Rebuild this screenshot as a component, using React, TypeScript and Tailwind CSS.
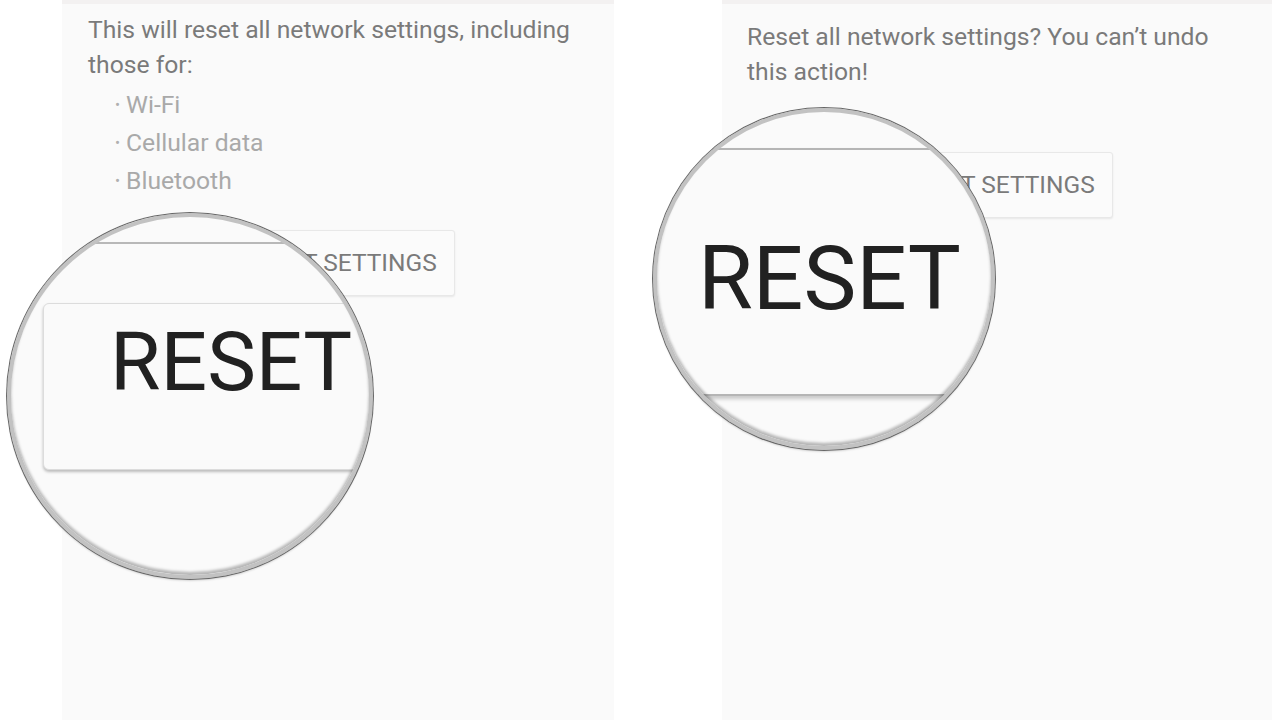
import React from "react";

const font = { fontFamily: "Roboto, 'Noto Sans', sans-serif" };

function Magnifier({
  className,
  children,
}: {
  className: string;
  children: React.ReactNode;
}) {
  return (
    <div className={`absolute rounded-full ${className}`}>
      <div className="relative w-full h-full rounded-full overflow-hidden bg-[#fafafa]">
        {children}
        <div className="absolute inset-0 rounded-full border-[4px] border-[#c2c2c2] shadow-[inset_0_-3px_3px_rgba(0,0,0,0.28)]" />
      </div>
      <div className="absolute inset-0 rounded-full shadow-[0_0_0_1px_#666666,0_2px_2px_rgba(0,0,0,0.15)] pointer-events-none" />
    </div>
  );
}

function Bullet({ children }: { children: React.ReactNode }) {
  return (
    <li className="flex items-center h-[38px]">
      <span className="text-[15px] w-[11px] text-[#b0b0b0]">•</span>
      <span>{children}</span>
    </li>
  );
}

export default function App() {
  return (
    <div
      className="relative w-[1280px] h-[720px] bg-white flex overflow-hidden"
      style={font}
    >
      {/* Left panel */}
      <div className="ml-[62px] w-[552px] h-full bg-[#fafafa] flex flex-col">
        <div className="h-[4px] bg-[#f3f1f1]" />
        <div className="pl-[26px] pt-[8px] text-[24.7px] leading-[35px] text-[#7a7a7a]">
          This will reset all network settings, including
          <br />
          those for:
        </div>
        <ul className="mt-[4px] pl-[53px] text-[24.7px] text-[#a9a9a9]">
          <Bullet>Wi-Fi</Bullet>
          <Bullet>Cellular data</Bullet>
          <Bullet>Bluetooth</Bullet>
        </ul>
        <div className="mt-[30px] flex justify-center">
          <div className="ml-[6px] w-[228px] h-[66px] flex items-center justify-center border border-[#e8e8e8] rounded-[3px] bg-[#fbfbfb] shadow-[0_1px_2px_rgba(0,0,0,0.08)] text-[24.5px] text-[#7a7a7a]">
            RESET SETTINGS
          </div>
        </div>
      </div>

      {/* Right panel */}
      <div className="ml-[108px] w-[550px] h-full bg-[#fafafa] flex flex-col">
        <div className="h-[4px] bg-[#f3f1f1]" />
        <div className="pl-[25px] pt-[15px] text-[24.7px] leading-[35px] text-[#7a7a7a]">
          Reset all network settings? You can’t undo
          <br />
          this action!
        </div>
        <div className="mt-[63px] flex justify-center">
          <div className="ml-[4px] w-[228px] h-[66px] flex items-center justify-center border border-[#e8e8e8] rounded-[3px] bg-[#fbfbfb] shadow-[0_1px_2px_rgba(0,0,0,0.08)] text-[24.5px] text-[#7a7a7a]">
            RESET SETTINGS
          </div>
        </div>
      </div>

      {/* Left magnifier */}
      <Magnifier className="left-[7px] top-[213px] w-[366px] h-[366px]">
        <div className="mt-[29px] h-[2px] bg-[#b8b8b8]" />
        <div className="mt-[59px] ml-[36px] w-[600px] h-[167px] border border-[#dcdcdc] rounded-[6px] bg-[#fafafa] shadow-[0_2px_3px_rgba(0,0,0,0.25)] pl-[66px] pt-[17px]">
          <div className="text-[82px] leading-none text-[#212121]">RESET</div>
        </div>
      </Magnifier>

      {/* Right magnifier */}
      <Magnifier className="left-[653px] top-[108px] w-[342px] h-[342px]">
        <div className="mt-[40px] -ml-[20px] w-[400px] h-[248px] border-t-[2px] border-b-[2px] border-[#b5b5b5] bg-[#fafafa] shadow-[0_3px_4px_rgba(0,0,0,0.2)] pl-[65px] pt-[84px]">
          <div className="text-[89px] leading-none text-[#212121]">RESET</div>
        </div>
      </Magnifier>
    </div>
  );
}
